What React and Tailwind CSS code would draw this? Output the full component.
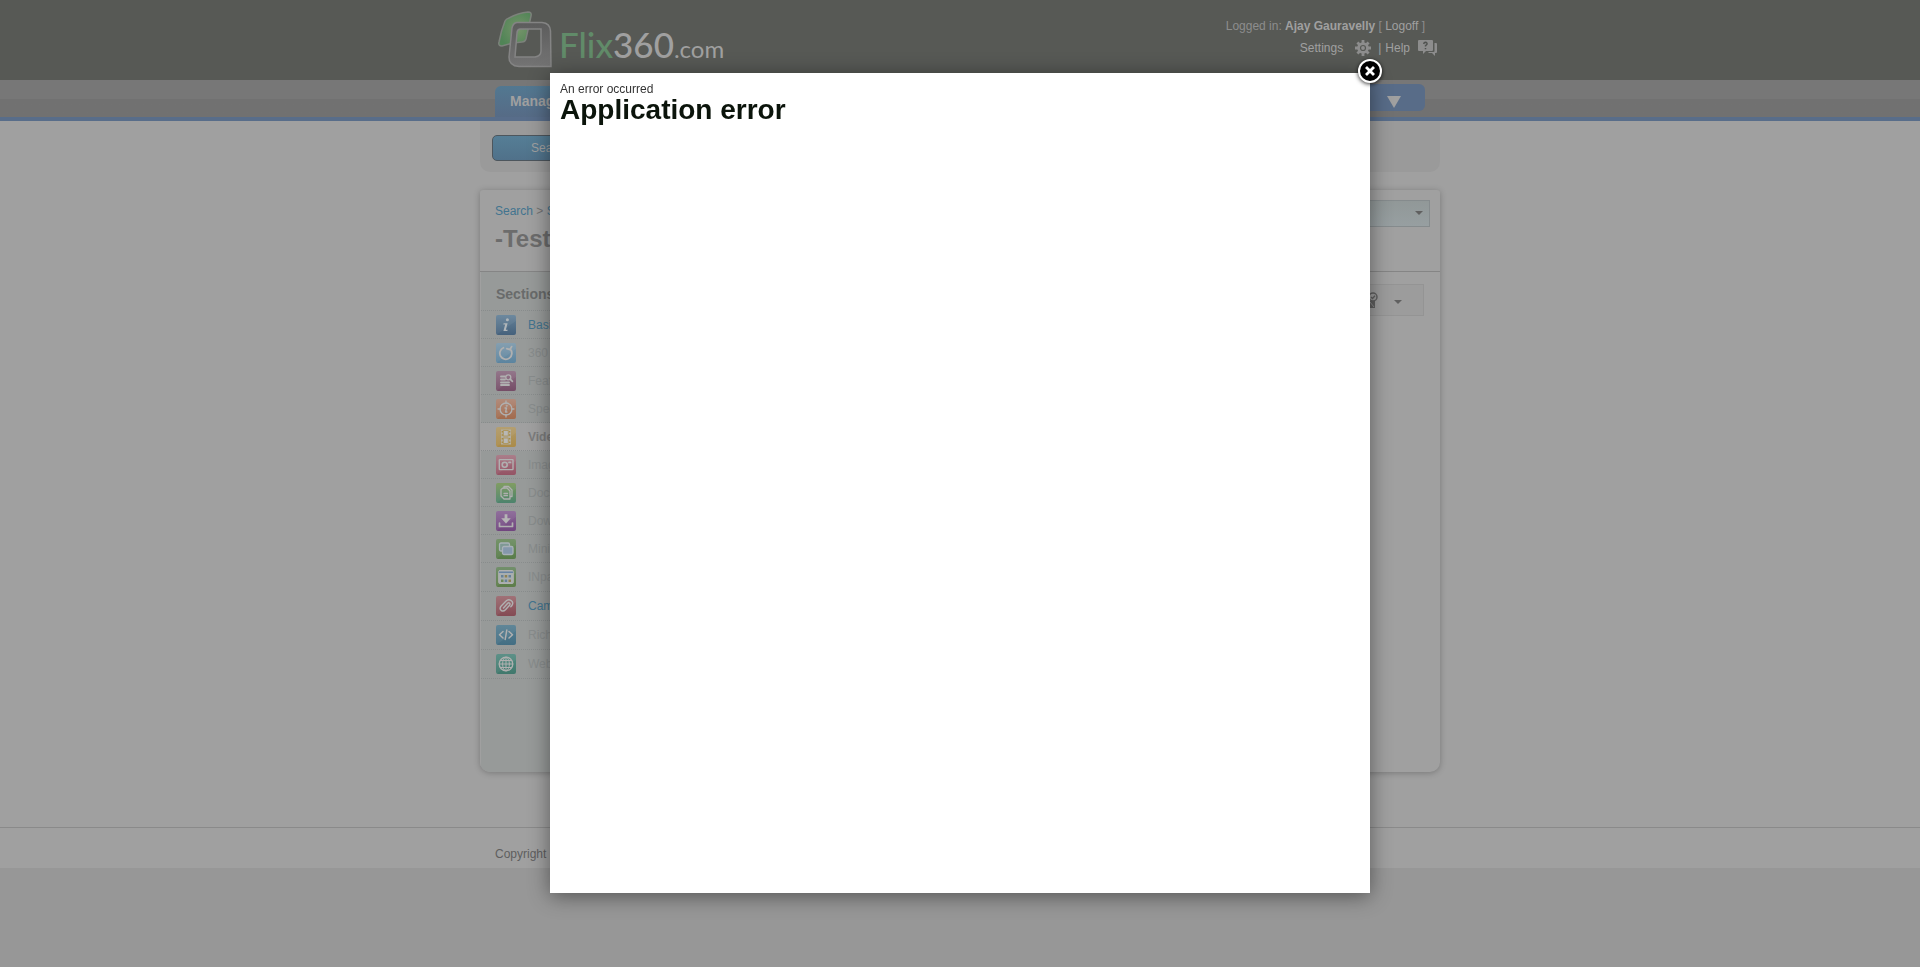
import React from "react";

const sections = [
  { name: "Basic", icon: "info", from: "#66839a", to: "#45617c", state: "link" },
  { name: "360", icon: "rotate", from: "#7f9aac", to: "#5b849f", state: "off" },
  { name: "Feature", icon: "features", from: "#8e7085", to: "#754d67", state: "off" },
  { name: "Specs", icon: "spec", from: "#ad8574", to: "#a26b4d", state: "off" },
  { name: "Video", icon: "film", from: "#b09a6a", to: "#ab8b48", state: "active" },
  { name: "Images", icon: "camera", from: "#a67784", to: "#945364", state: "off" },
  { name: "Docs", icon: "docs", from: "#7a985a", to: "#4c836d", state: "off" },
  { name: "Down", icon: "download", from: "#8a6897", to: "#71467f", state: "off" },
  { name: "Minisite", icon: "windows", from: "#6e8e62", to: "#587c49", state: "off" },
  { name: "INpage", icon: "grid", from: "#6b8963", to: "#5d7d49", state: "off", tall: true },
  { name: "Cam", icon: "clip", from: "#9b6a70", to: "#844b54", state: "link", tall: true },
  { name: "Rich", icon: "code", from: "#588093", to: "#436e83", state: "off", tall: true },
  { name: "Web", icon: "globe", from: "#558b82", to: "#40786c", state: "off", tall: true },
];

function Glyph({ name }) {
  switch (name) {
    case "info":
      return (
        <g stroke="none" fill="#b0b6ba">
          <circle cx="11.4" cy="4.8" r="1.5" />
          <path d="M7.6 8.2h4l-1.7 6.6h1.8l-.4 1.2H7.4l1.8-6.6H7.3z" />
        </g>
      );
    case "rotate":
      return <path d="M7.400 4.800A6 6 0 1 0 14.200 6.200M15.600 3.600L14 6.600L10.800 5.600" strokeWidth="1.800" />;
    case "features":
      return (
        <g>
          <path d="M5 5.500h4M5 8.500h4M5 11.500h8M5 14h8" strokeWidth="1.900" />
          <circle cx="12.300" cy="6.300" r="2.500" strokeWidth="1.300" />
          <path d="M14.200 8.200L16.400 10.400" strokeWidth="1.700" />
        </g>
      );
    case "spec":
      return (
        <g strokeWidth="1.300">
          <circle cx="10" cy="10" r="6" />
          <path d="M10 2v2.500M10 15.500V18M2 10h2.500M15.500 10H18" />
          <path d="M9 9h1.500l-.9 4h1.400" />
          <circle cx="10.700" cy="6.700" r=".4" />
        </g>
      );
    case "film":
      return (
        <g stroke="none">
          <path d="M5 2.500h10v15H5z" fill="#b3aea0" />
          <path d="M7.700 3.500h4.600v5.500H7.700zM7.700 11h4.600v5.500H7.700z" fill="#b8b8b6" stroke="#ab9050" strokeWidth=".8" />
          <path d="M5.700 4h1.200v1.500H5.700zM5.700 7.300h1.200v1.500H5.700zM5.700 11h1.200v1.500H5.700zM5.700 14.500h1.200V16H5.700zM13.100 4h1.200v1.500h-1.200zM13.100 7.300h1.200v1.500h-1.200zM13.100 11h1.200v1.500h-1.200zM13.100 14.500h1.200V16h-1.200z" fill="#a8893f" />
        </g>
      );
    case "camera":
      return (
        <g>
          <rect x="3.300" y="4.600" width="13.700" height="10" rx=".5" strokeWidth="1.400" />
          <circle cx="8.700" cy="9.700" r="2.500" strokeWidth="1.600" />
          <path d="M13 7.400h1.500" strokeWidth="1.800" />
        </g>
      );
    case "docs":
      return (
        <g strokeWidth="1.300">
          <path d="M8 5V3.500h4.500L16 7v6.500h-1.500" />
          <path d="M5 6.500L7 5h4l3 3v8H8l-3-3z" />
          <path d="M8 10.500h3.500M8 12.700h3.500" />
        </g>
      );
    case "download":
      return (
        <g>
          <path d="M3.500 12v3.500h13V12" strokeWidth="1.700" />
          <path d="M8.600 3.200h2.800v4h3.400L10 12.400L5.200 7.200h3.400z" fill="#b5b5b5" stroke="none" />
        </g>
      );
    case "windows":
      return (
        <g stroke="#a9b1b8" strokeWidth="1.300">
          <rect x="3.500" y="4" width="10" height="8" rx="1.500" fill="#7e9994" />
          <rect x="6.500" y="7.500" width="10.500" height="8" rx="1.500" fill="#8598ac" />
        </g>
      );
    case "grid":
      return (
        <g>
          <rect x="2.700" y="3.500" width="14.600" height="13" rx="1" fill="#a8aeb0" strokeWidth="1" />
          <path d="M3.500 5.200h13" stroke="#6883a2" strokeWidth="1.600" />
          <path d="M5 8h2.500v2.500H5zM12.500 8H15v2.500h-2.500zM8.700 12.500h2.500V15H8.700z" fill="#668198" stroke="none" />
          <path d="M8.700 8h2.500v2.500H8.700zM12.500 12.500H15V15h-2.500z" fill="#8f8150" stroke="none" />
          <path d="M5 12.500h2.500V15H5z" fill="#6b8754" stroke="none" />
        </g>
      );
    case "clip":
      return (
        <path
          d="M7.500 12L11.500 7.500C13 6 15 7.600 13.600 9.200L9.500 13.800C6.500 16.800 2.500 13.500 5 10.300L9.800 5.300C13 2 18 5 16.300 8.800C16 9.600 15.500 10.200 14.800 10.800"
          strokeWidth="1.400"
        />
      );
    case "code":
      return <path d="M7 6.500L3.500 9.700L7 13M13 6.500L16.500 9.700L13 13M10.800 5L9.200 14.500" strokeWidth="1.500" />;
    default:
      return (
        <g strokeWidth="1">
          <circle cx="10" cy="10" r="6.800" strokeWidth="1.300" />
          <ellipse cx="10" cy="10" rx="3.400" ry="6.800" />
          <path d="M3.200 10h13.600M4.300 6.500h11.400M4.300 13.500h11.400M10 3.200v13.600" />
        </g>
      );
  }
}

function SectionIcon({ item }) {
  const id = "tile-" + item.icon;
  return (
    <svg viewBox="0 0 20 20" className="size-5 shrink-0" aria-hidden="true">
      <defs>
        <linearGradient id={id} x1="0" y1="0" x2="0" y2="1">
          <stop offset="0" stopColor={item.from} />
          <stop offset="1" stopColor={item.to} />
        </linearGradient>
      </defs>
      <rect width="20" height="20" rx="2" fill={"url(#" + id + ")"} />
      <path d="M0 20L20 6V2a2 2 0 0 0-2-2H2a2 2 0 0 0-2 2z" fill="#fff" opacity=".05" />
      <g fill="none" stroke="#b0b0b0" strokeLinecap="round" strokeLinejoin="round" strokeWidth="1.500">
        <Glyph name={item.icon} />
      </g>
    </svg>
  );
}

function SectionRow({ item }) {
  const height = item.tall ? "h-[29px]" : "h-7";
  const active = item.state === "active";
  const color =
    item.state === "link" ? "text-[#42748f]" : active ? "text-[#7c7c7c] font-bold" : "text-[#888c8c]";
  return (
    <li>
      <a
        href="#"
        className={
          "flex items-center gap-3 border-b border-dotted border-[#888c8c] pl-[15px] text-xs " +
          height + " " + color + (active ? " bg-[#a0a0a0]" : "")
        }
      >
        <SectionIcon item={item} />
        {item.name}
      </a>
    </li>
  );
}

function Logo() {
  return (
    <a href="#" className="flex items-start" aria-label="Flix360.com">
      <svg viewBox="0 0 56 58" className="mt-[11px] h-[58px] w-14" aria-hidden="true">
        <defs>
          <radialGradient id="leaf" cx=".6" cy=".5" r=".6">
            <stop offset="0" stopColor="#76946a" />
            <stop offset="1" stopColor="#508456" />
          </radialGradient>
          <linearGradient id="frame" x1="0" y1="0" x2="0" y2="1">
            <stop offset="0" stopColor="#5c5c5c" />
            <stop offset="1" stopColor="#747474" />
          </linearGradient>
        </defs>
        <path
          d="M8 10Q9 8 12 7Q21 2 31 1Q35 1 34 5L29 28Q28 31 25 31L16 32L5 35Q1 35 2 31Q4 20 8 10Z"
          fill="url(#leaf)" stroke="#7c827b" strokeWidth="1.500"
        />
        <path
          fillRule="evenodd"
          d="M20 11.500H45Q53 12 53.500 20L54 55.500H22Q12 55 12 46L15 17Q16 12 20 11.500ZM23 18Q20 18.500 20 22L18 46H38Q44 45 44 40V18Z"
          fill="url(#frame)" stroke="#848484" strokeWidth="1.500"
        />
      </svg>
      <span className="mt-[21px] ml-[6px] font-['Lato',sans-serif] text-[35px] leading-[46px] font-medium text-[#a0a0a0]">
        <span className="text-[#618b69]">Flix</span>360<span className="text-[24px] font-normal">.com</span>
      </span>
    </a>
  );
}

function Caret({ className }) {
  return (
    <svg viewBox="0 0 8 4" className={"h-1 w-2 " + className} aria-hidden="true">
      <path d="M0 0h8L4 4z" fill="currentColor" />
    </svg>
  );
}

function Header() {
  return (
    <header className="h-20 bg-[#575955]">
      <div className="mx-auto flex w-full max-w-[960px] justify-between pl-[17px]">
        <Logo />
        <div className="flex flex-col items-end pt-[17px] text-xs text-[#a0a0a0]">
          <p className="mr-[15px] leading-[18px] text-[#8d8d8d]">
            Logged in: <b className="text-[#a0a0a0]">Ajay Gauravelly</b> [ <a href="#" className="text-[#a0a0a0]">Logoff</a> ]
          </p>
          <div className="mt-1 mr-[3px] flex items-center leading-[18px]">
            <a href="#" className="flex items-center gap-3">
              Settings
              <svg viewBox="0 0 16 16" className="size-4" aria-hidden="true">
                <path d="M8 0v16M0 8h16M2.400 2.400l11.200 11.200M13.600 2.400L2.400 13.600" stroke="#8d8d8d" strokeWidth="2.800" />
                <circle cx="8" cy="8" r="5.800" fill="#8d8d8d" />
                <circle cx="8" cy="8" r="2.500" fill="none" stroke="#575955" strokeWidth="1.200" />
              </svg>
            </a>
            <span className="mr-1 ml-[7px]">|</span>
            <a href="#" className="flex items-center gap-2">
              Help
              <svg viewBox="0 0 19 16" className="h-4 w-[19px]" aria-hidden="true">
                <path d="M1 0h13q1 0 1 1v9q0 1-1 1H8l-3 3v-3H1q-1 0-1-1V1q0-1 1-1zM16.500 3H18q1 0 1 1v8q0 1-1 1h-1v3l-3-3h-4l1-1h4.500q1 0 1-1z" fill="#8d8d8d" />
                <path d="M5.700 4Q6 2.300 7.500 2.300Q9.300 2.500 9 4.200L7.500 5.800V6.500M7.500 8v1.300" fill="none" stroke="#505250" strokeWidth="1.500" />
              </svg>
            </a>
          </div>
        </div>
      </div>
    </header>
  );
}

function MainNav() {
  return (
    <nav className="h-[41px] border-b-4 border-[#586d8a] bg-linear-to-b from-[#777777] from-50% to-[#717171] to-50%">
      <div className="mx-auto flex w-full max-w-[960px] items-start justify-between pr-[15px] pl-[15px]">
        <a
          href="#"
          className="mt-[6px] flex h-[31px] w-40 items-center rounded-t-md bg-linear-to-b from-[#527891] to-[#566b86] pl-[15px] text-[14px] font-bold text-[#a0a0a0]"
        >
          Manage
        </a>
        <button
          type="button"
          aria-label="More"
          className="mt-1 flex h-[27px] w-36 items-center justify-end rounded-md bg-[#586c88] pt-2 pr-6 text-[#a0a0a0]"
        >
          <svg viewBox="0 0 14 12" className="h-3 w-[14px]" aria-hidden="true">
            <path d="M0 0h14L7 12z" fill="currentColor" />
          </svg>
        </button>
      </div>
    </nav>
  );
}

function ErrorDialog() {
  return (
    <div className="fixed inset-0 flex items-start justify-center pt-[73px]">
      <div
        role="dialog"
        aria-labelledby="error-title"
        className="relative h-[820px] w-[820px] bg-white px-[10px] pt-2 shadow-[0_3px_20px_rgba(0,0,0,0.45)]"
      >
        <p className="text-xs leading-4 text-[#333333]">An error occurred</p>
        <h1 id="error-title" className="text-[28px] leading-[26px] font-bold text-[#0b140b]">
          Application error
        </h1>
        <button
          type="button"
          aria-label="Close"
          className="absolute -top-[14px] -right-3 flex size-6 items-center justify-center rounded-full border-2 border-white bg-black shadow-[0_1px_4px_rgba(0,0,0,0.8)]"
        >
          <svg viewBox="0 0 10 10" className="size-[10px]" aria-hidden="true">
            <path d="M2 2l6 6M8 2L2 8" stroke="#fff" strokeWidth="2.800" strokeLinecap="square" />
          </svg>
        </button>
      </div>
    </div>
  );
}

export default function App() {
  return (
    <div className="min-h-screen bg-[#979797] font-['Liberation_Sans',Arial,sans-serif]">
      <div className="bg-[#a0a0a0]">
        <Header />
        <MainNav />
        <main className="mx-auto w-full max-w-[960px]">
          <div className="h-[51px] rounded-b-[10px] bg-[#9a9a9a] px-3 pt-[14px]">
            <button
              type="button"
              className="h-[26px] w-[116px] rounded-[5px] border border-[#4d565d] bg-linear-to-b from-[#557e96] to-[#50718a] text-xs text-[#a0a0a0]"
            >
              Search
            </button>
          </div>
          <section className="mt-[18px] flex min-h-[582px] flex-col overflow-hidden rounded-t-[3px] rounded-b-[10px] bg-[#a0a0a0] shadow-[0_1px_6px_rgba(0,0,0,0.25)]">
            <div className="flex h-[82px] justify-between border-b border-[#858585] pt-[10px] pr-[10px] pl-[15px]">
              <div className="pt-[3px]">
                <p className="text-xs leading-4 text-[#707070]">
                  <a href="#" className="text-[#42748f]">Search</a> &gt; <a href="#" className="text-[#42748f]">S</a>
                </p>
                <h2 className="mt-[6px] text-[24px] leading-7 font-bold text-[#6c6c6c]">-Test</h2>
              </div>
              <button
                type="button"
                aria-label="Choose item"
                className="flex h-[27px] w-60 items-center justify-end border border-[#858b8d] bg-linear-to-b from-[#919898] to-[#979fa1] pr-[6px] text-[#606060]"
              >
                <Caret className="-mt-px" />
              </button>
            </div>
            <div className="flex flex-1">
              <aside className="w-60 border-l border-[#a0a0a0] bg-[#979a99] pt-3">
                <h3 className="h-[27px] border-b border-dotted border-[#888c8c] pl-[15px] text-[14px] leading-5 font-bold text-[#696b6b]">
                  Sections
                </h3>
                <ul>
                  {sections.map((item) => (
                    <SectionRow key={item.icon} item={item} />
                  ))}
                </ul>
              </aside>
              <div className="flex flex-1 justify-end pt-3 pr-4">
                <button
                  type="button"
                  aria-label="Actions"
                  className="flex h-8 w-60 items-center justify-end gap-4 border border-[#949494] bg-[#9c9c9c] pr-[21px] text-[#606060]"
                >
                  <svg viewBox="0 0 18 16" className="h-4 w-[18px]" aria-hidden="true">
                    <path d="M4 9h11v7H4z" fill="#606060" />
                    <circle cx="13" cy="5" r="4" fill="#9b9b9b" stroke="#606060" strokeWidth="1.500" />
                    <path d="M11 5l1.500 1.500L15 3.800" fill="none" stroke="#606060" strokeWidth="1.300" />
                    <path d="M10 10l4 5" stroke="#8c8c8c" />
                  </svg>
                  <Caret className="mt-[3px]" />
                </button>
              </div>
            </div>
          </section>
        </main>
        <footer className="mt-[55px] h-[41px] border-t border-[#8a8a8a] text-xs text-[#5e5e5e]">
          <p className="mx-auto w-full max-w-[960px] pt-[18px] pl-[15px] leading-4">Copyright</p>
        </footer>
      </div>
      <ErrorDialog />
    </div>
  );
}
